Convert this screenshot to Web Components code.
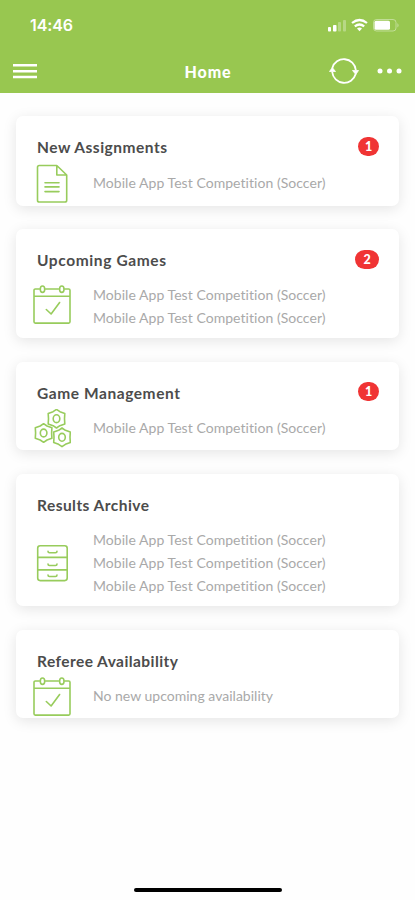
<!DOCTYPE html>
<html lang="en">
<head>
<meta charset="utf-8">
<title>Home</title>
<style>
html,body{margin:0;background:#fefefe;height:900px;overflow:hidden}
body{font-family:Lato,"Open Sans",sans-serif;color:#454545}
</style>
</head>
<body>
<home-screen></home-screen>
<script>
const define = (name, html, setup) => customElements.define(name, class extends HTMLElement {
  connectedCallback() {
    if (this.shadowRoot) return;
    const t = document.createElement('template');
    t.innerHTML = html;
    this.attachShadow({mode: 'open'}).append(t.content.cloneNode(true));
    if (setup) setup(this, this.shadowRoot);
  }
});

// Text whose tracking is spread so that it fills the width given in "w".
define('fit-text', `<style>:host{display:inline-block;white-space:nowrap}span{display:inline-block}</style><span><slot></slot></span>`, (el, root) => {
  const s = root.querySelector('span'), n = el.textContent.length;
  const w = s.getBoundingClientRect().width;
  s.style.letterSpacing = ((+el.getAttribute('w') - w) / (n - 1)).toFixed(3) + 'px';
  s.style.marginRight = '-1px';
});

const icons = {
  doc: `<path d="M6.3 1.5h17.5L33.7 11v25.200a1.800 1.800 0 0 1-1.800 1.800H6.300a1.800 1.800 0 0 1-1.800-1.800V3.300a1.800 1.800 0 0 1 1.800-1.800zM23.800 1.700V11h9.700M12 18.700h14M12 22.900h14M12 27.600h14"/>`,
  calendar: `<path d="M6.500 4H2.300A1.300 1.300 0 0 0 1 5.300v31.500a1.300 1.300 0 0 0 1.300 1.300h33.400a1.300 1.300 0 0 0 1.300-1.300V5.300A1.300 1.300 0 0 0 35.700 4h-4M12.500 4h13M1 11.300h36M13.300 24.500l4.800 4.500 8.500-11.500"/><ellipse cx="9.500" cy="4.200" rx="2.200" ry="3.200"/><ellipse cx="28.800" cy="4.200" rx="2.200" ry="3.200"/>`,
  gears: ['23.500 9.700', '10.600 24', '29 28.300'].map(p => `<g transform="translate(${p})"><path d="M0-9.300 3.400-7 8.300-5.200 8 0 8.300 5.200 3.400 7 0 9.300-3.400 7-8.300 5.200-8 0-8.300-5.200-3.400-7z"/><ellipse rx="3.300" ry="3.900"/></g>`).join(''),
  cabinet: `<rect x="4.700" y="1.800" width="29.500" height="34.800" rx="2.500"/><path d="M4.700 13.400h29.500M4.700 25.900h29.500M15 7.200q0 1.500 1.500 1.500h6q1.500 0 1.500-1.500M15 20q0 1.500 1.500 1.500h6q1.500 0 1.500-1.500M15 31q0 1.500 1.500 1.500h6q1.500 0 1.500-1.500"/>`
};
define('card-icon', `<style>:host{display:block;width:38px;height:39px;margin:-8px 0}svg{display:block;fill:none;stroke:#98cc5c;stroke-width:1.600;stroke-linejoin:round;stroke-linecap:round}</style><svg width="38" height="39"></svg>`,
  (el, root) => { root.querySelector('svg').innerHTML = icons[el.getAttribute('name')]; });

define('count-badge', `<style>:host{display:block;box-sizing:border-box;height:19px;width:21px;border-radius:10px;background:#f03434;color:#fff;font:900 12.500px/19px Lato,sans-serif;text-align:center}:host([wide]){width:24px}</style><slot></slot>`);

define('info-card', `<style>
:host{display:block;box-sizing:border-box;padding:20px 20px 0 21px;border-radius:7px;background:#fff;box-shadow:0 3px 14px rgba(0,0,0,.1)}
header{display:flex;justify-content:space-between;height:23px;line-height:22px;font-weight:700;font-size:15.500px;color:#4c4c4c}
.main{display:grid;grid-template-columns:38px 1fr;column-gap:22px;align-items:center;margin:var(--body-gap,12px) 0 0 -4px}
.rows{display:flex;flex-direction:column;line-height:23px;font-size:14px;color:#a9a9a9;margin:-1px 0 1px}
</style><header><slot name="title"></slot><slot name="badge"></slot></header><div class="main"><slot name="icon"></slot><div class="rows"><slot></slot></div></div>`);

define('status-icons', `<style>:host{display:block}svg{display:block}</style>
<svg width="72" height="16" fill="#fff"><rect x="0" y="10" width="3" height="4.500" rx=".8"/><rect x="5" y="8" width="3.500" height="6.500" rx=".8"/><g opacity=".3"><rect x="10" y="5" width="3" height="9.500" rx=".8"/><rect x="15" y="3" width="3" height="11.500" rx=".8"/></g>
<g fill="none" stroke="#fff" stroke-width="2.200"><path d="M24 6q7.500-6 15 0M26.800 9.400q4.700-3.800 9.400 0"/></g><path d="M29 11.500q2.500-1.800 5 0L31.500 14.200z"/>
<rect x="45.500" y="2.500" width="22.500" height="11.500" rx="3" fill="none" stroke="#fff" stroke-opacity=".4"/><rect x="46.500" y="3.700" width="15.500" height="9" rx="1.500"/><path d="M69.500 6v4.500q2-2.200 0-4.500" opacity=".5"/></svg>`);

define('top-bar', `<style>
:host{display:flex;flex-direction:column;height:93px;background:#98c750;color:#fff}
.status{display:flex;justify-content:space-between;padding:0 15px 0 30px;height:50px;align-items:center;font:600 16px Inter,sans-serif}
.nav{display:grid;grid-template-columns:1fr auto 1fr;align-items:center;height:42px;padding:0 13px;font-weight:900;font-size:16px}
.tools{display:flex;justify-content:flex-end;align-items:center;gap:17px}
svg{display:block}
</style>
<div class="status"><fit-text w="43">14:46</fit-text><status-icons></status-icons></div>
<div class="nav"><svg width="24" height="16" stroke="#fff" stroke-width="2.500"><path d="M0 2.200h24M0 8.200h24M0 14h24"/></svg><fit-text w="46">Home</fit-text>
<div class="tools"><svg width="31" height="28" fill="none" stroke="#fff" stroke-width="1.800"><path d="M3.300 11A12 12 0 0 1 26.800 13M26.700 17A12 12 0 0 1 3.200 15"/><path d="M.5 14.500 3.300 10.500 6.500 14.500zM23.500 13.500l3.300 4 2.700-4z" fill="#fff" stroke-width=".8"/></svg>
<svg width="25" height="8" fill="#fff"><circle cx="3" cy="4" r="2.500"/><circle cx="12.500" cy="4" r="2.500"/><circle cx="22" cy="4" r="2.500"/></svg></div></div>`);

const comp = '<fit-text w="233">Mobile App Test Competition (Soccer)</fit-text>';
const cards = [
  ['New Assignments', 130, 'doc', 1, [comp], 90, '--body-gap:13px'],
  ['Upcoming Games', 129, 'calendar', 2, [comp, comp], 109, '--body-gap:12px'],
  ['Game Management', 143, 'gears', 1, [comp], 88, ''],
  ['Results Archive', 112, 'cabinet', 0, [comp, comp, comp], 132, ''],
  ['Referee Availability', 141, 'calendar', 0, ['<fit-text w="180">No new upcoming availability</fit-text>'], 88, '']
];
define('home-screen', `<style>
:host{display:flex;flex-direction:column;width:415px;height:900px;background:#fefefe}
main{display:flex;flex-direction:column;gap:24px;padding:23px 16px 0;flex:1}
info-card:nth-child(2){margin-top:-1px}
info-card:nth-child(2) card-icon{margin:-11px 0 -5px}
count-badge{margin-top:1px}
info-card:nth-child(3) count-badge{margin-top:0}
.home{width:148px;height:4.500px;border-radius:2px;background:#000;margin:0 auto 8px}
</style><top-bar></top-bar><main>${cards.map(([t, w, ic, n, rows, h, v]) =>
`<info-card style="height:${h}px;${v}"><fit-text slot="title" w="${w}">${t}</fit-text>${n ? `<count-badge slot="badge"${n > 1 ? ' wide' : ''}>${n}</count-badge>` : ''}<card-icon slot="icon" name="${ic}"></card-icon>${rows.join('')}</info-card>`).join('')}</main><div class="home"></div>`);
</script>
</body>
</html>
